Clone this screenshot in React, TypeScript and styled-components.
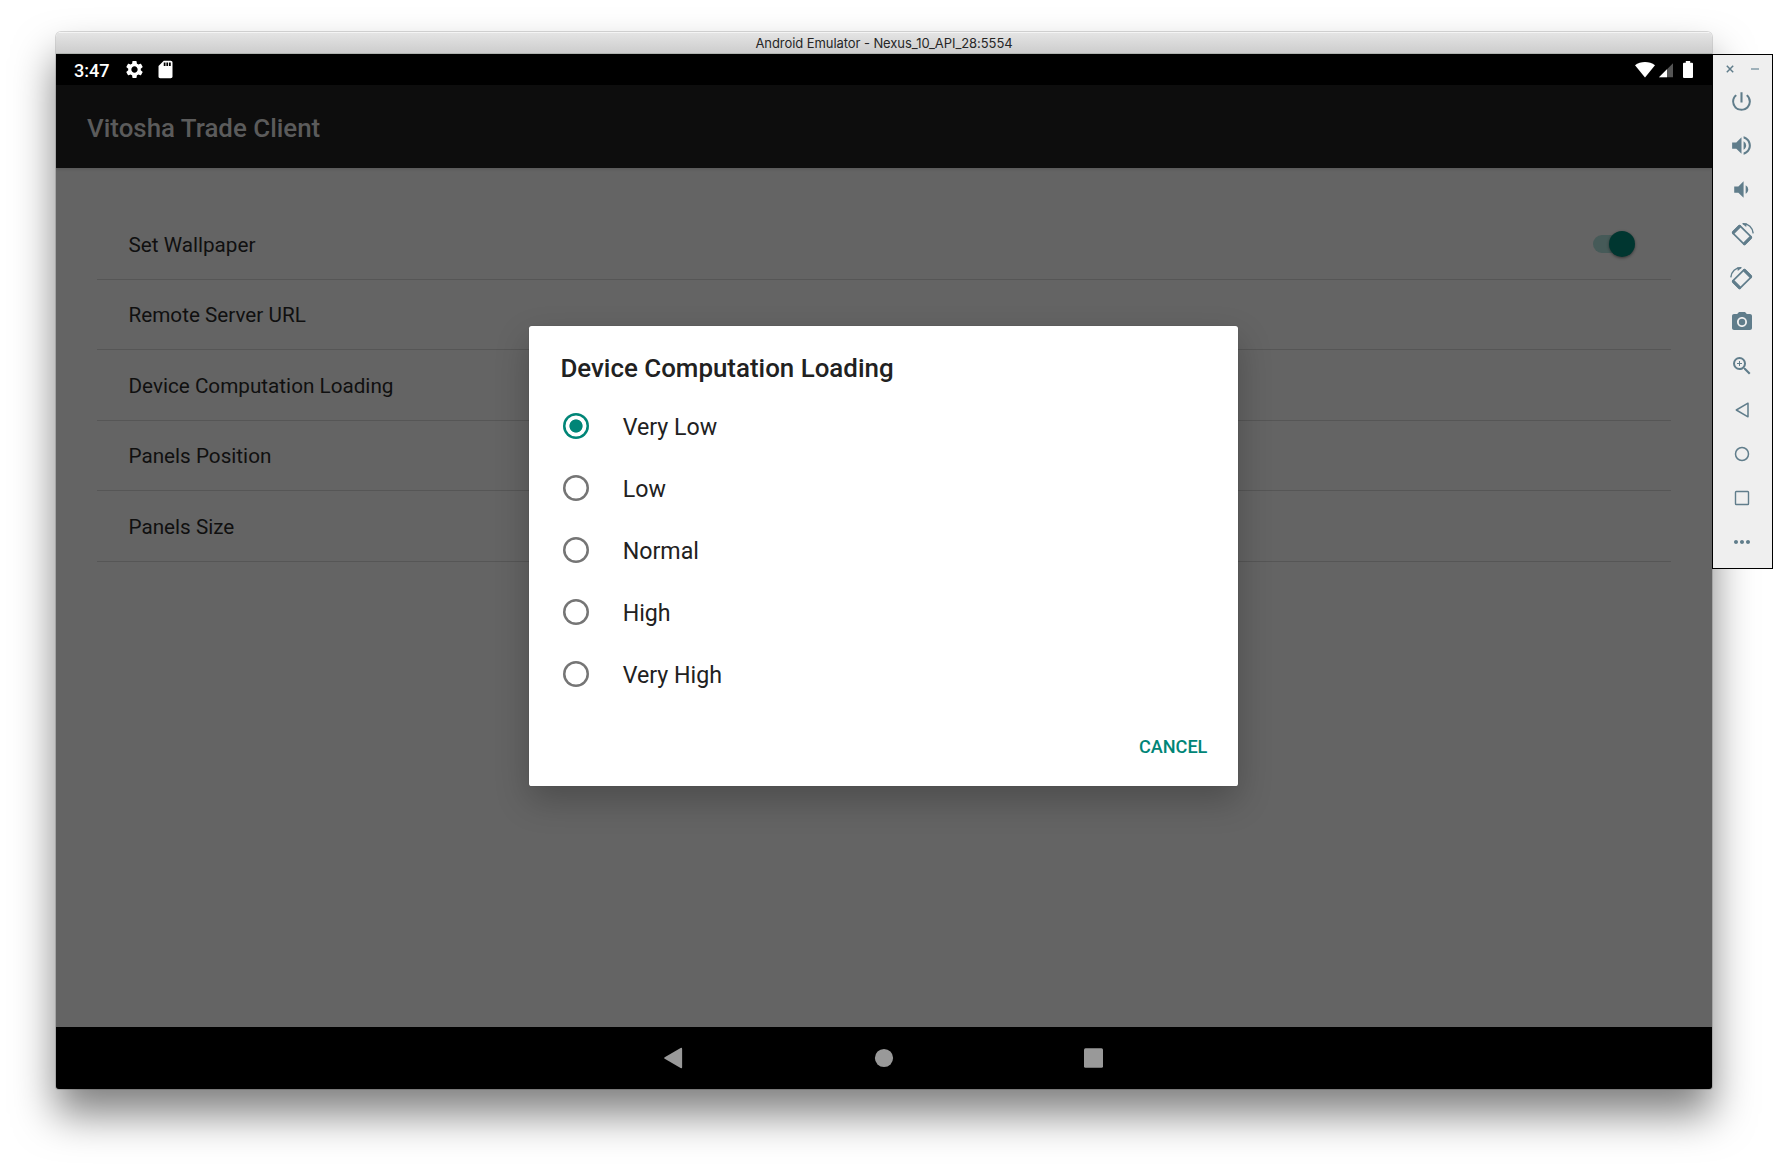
import React, { useState } from "react";
import styled, { createGlobalStyle } from "styled-components";
import {
  MdSettings,
  MdSdCard,
  MdPowerSettingsNew,
  MdVolumeUp,
  MdVolumeDown,
  MdPhotoCamera,
  MdZoomIn,
  MdMoreHoriz,
} from "react-icons/md";

const GlobalStyle = createGlobalStyle`
  * { box-sizing: border-box; }
  body { margin: 0; background: #fff; overflow: hidden; }
`;

const Desktop = styled.main`
  display: flex;
  align-items: flex-start;
  width: 1773px;
  height: 1169px;
  padding: 32px 0 0 56px;
  overflow: hidden;
  font-family: Roboto, "Liberation Sans", sans-serif;
`;

const EmulatorWindow = styled.section`
  display: flex;
  flex-direction: column;
  width: 1656px;
  height: 1057px;
  border-radius: 5px 5px 3px 3px;
  overflow: hidden;
  box-shadow: 0 0 0 1px rgba(0, 0, 0, 0.14), 0 25px 42px rgba(0, 0, 0, 0.5);
`;

const TitleBar = styled.header`
  display: flex;
  align-items: center;
  justify-content: center;
  height: 22px;
  flex: none;
  background: linear-gradient(#e4e4e4, #cdcdcd);
  border-top: 1px solid #f4f4f4;
  border-bottom: 1px solid #b0b4b0;
  color: #262626;
  font: 400 13px/20px Inter, Roboto, sans-serif;
  letter-spacing: -0.07px;
`;

const Screen = styled.div`
  position: relative;
  display: flex;
  flex-direction: column;
  flex: 1;
  background: #646464;
`;

const StatusBar = styled.div`
  display: flex;
  align-items: center;
  height: 31px;
  padding: 0 19px 0 18px;
  background: #000;
  color: #fff;
`;

const Clock = styled.span`
  width: 50px;
  font-size: 18.1px;
  font-weight: 500;
  line-height: 31px;
  padding-top: 2px;
`;

const StatusIcons = styled.div`
  display: flex;
  align-items: center;
  gap: 10px;
`;

const SystemIcons = styled.svg`
  margin-left: auto;
  display: block;
`;

const AppBar = styled.div`
  display: flex;
  align-items: center;
  height: 83px;
  padding: 3px 31px 0;
  background: #0d0d0d;
  color: #5b5b5b;
  font-size: 25.9px;
  font-weight: 500;
  box-shadow: 0 1px 3px rgba(0, 0, 0, 0.15);
`;

const Preferences = styled.ul`
  list-style: none;
  margin: 0;
  padding: 41px 41px 0 41px;
  flex: 1;
`;

const Preference = styled.li`
  display: flex;
  align-items: center;
  justify-content: space-between;
  height: 70.5px;
  padding: 2px 35px 0 31.5px;
  border-bottom: 1px solid #565656;
  color: #101010;
  font-size: 20.7px;
`;

const SwitchTrack = styled.span`
  display: flex;
  justify-content: flex-end;
  align-items: center;
  width: 41px;
  height: 18px;
  margin: 0 2px 2px 0;
  border-radius: 9px;
  background: #465a58;
`;

const SwitchThumb = styled.span`
  width: 26px;
  height: 26px;
  flex: none;
  margin-right: -1px;
  border-radius: 50%;
  background: #003630;
  box-shadow: 0 1px 3px rgba(0, 0, 0, 0.45);
`;

const NavBar = styled.nav`
  display: flex;
  justify-content: center;
  align-items: center;
  gap: 180px;
  height: 62px;
  background: #000;
`;

const NavIcon = styled.svg`
  display: block;
  width: 29px;
  height: 24px;
  fill: #999;
`;

const Dialog = styled.div`
  position: absolute;
  left: 473.4px;
  top: 272.3px;
  width: 709px;
  height: 459.3px;
  display: flex;
  flex-direction: column;
  background: #fff;
  border-radius: 2.6px;
  box-shadow: 0 0 1px rgba(0, 0, 0, 0.25), 0 14px 34px rgba(0, 0, 0, 0.24);
  color: #212121;
`;

const DialogTitle = styled.h2`
  margin: 0;
  padding: 27px 31px 0;
  font-size: 25.9px;
  line-height: 30px;
  font-weight: 500;
  height: 68.7px;
`;

const Option = styled.div`
  display: flex;
  align-items: center;
  height: 62px;
  padding-left: 33.6px;
  gap: 33.7px;
  font-size: 23.2px;
  line-height: 28px;
`;

const OptionLabel = styled.span`
  padding-top: 2px;
`;

const Radio = styled.span<{ $on: boolean }>`
  width: 26px;
  height: 26px;
  border-radius: 50%;
  box-shadow: inset 0 0 0 2.5px ${(p) => (p.$on ? "#008577" : "#757575")};
  background: ${(p) => (p.$on ? "radial-gradient(circle, #008577 6.2px, transparent 7px)" : "none")};
`;

const Actions = styled.div`
  display: flex;
  justify-content: flex-end;
  padding: 29.8px 31px 0;
`;

const TextButton = styled.button`
  border: 0;
  padding: 0;
  background: none;
  color: #008577;
  font: 500 18.1px/24px Roboto, sans-serif;
`;

const Toolbar = styled.aside`
  display: flex;
  flex-direction: column;
  align-items: center;
  width: 61px;
  height: 515px;
  margin-top: 22px;
  border: 1px solid #000;
  background: #efefef;
  color: #607d8b;
  position: relative;
`;

const WindowControls = styled.div`
  display: flex;
  gap: 17px;
  height: 25px;
  padding-top: 10px;
`;

const ToolButton = styled.div<{ $large?: boolean }>`
  display: flex;
  align-items: center;
  justify-content: center;
  width: 100%;
  height: 44px;
  padding: ${(p) => (p.$large ? "0 2px 1px 0" : "0 1px 0 0")};
  svg { display: block; }
`;

const RotateIcon = ({ right }: { right?: boolean }) => (
  <svg width="26" height="26" viewBox="0 0 26 26" fill="none" stroke="currentColor">
    <g transform={right ? "matrix(-1 0 0 1 26 0)" : undefined}>
      <g transform="rotate(-45 13 14)">
        <rect x="7.900" y="5.500" width="10.200" height="17" rx="1" strokeWidth="1.700" />
        <path d="M8.600 6.200h8.800M8.600 21.800h8.800" strokeWidth="3" strokeLinecap="round" />
      </g>
      <path d="M13.800 2.700C19.300 2.400 23.700 6.500 24.200 12.400" strokeWidth="1.400" />
      <path d="M13 2.500 17.800 2.300 17.200 5.900Z" fill="currentColor" stroke="none" />
    </g>
  </svg>
);

const options = ["Very Low", "Low", "Normal", "High", "Very High"];
const preferences = ["Set Wallpaper", "Remote Server URL", "Device Computation Loading", "Panels Position", "Panels Size"];

export default function App() {
  const [selected, setSelected] = useState("Very Low");

  return (
    <>
      <GlobalStyle />
      <Desktop>
        <EmulatorWindow>
          <TitleBar>Android Emulator - Nexus_10_API_28:5554</TitleBar>
          <Screen>
            <StatusBar>
              <Clock>3:47</Clock>
              <StatusIcons>
                <MdSettings size={21} />
                <MdSdCard size={21} />
              </StatusIcons>
              <SystemIcons width="60" height="18" viewBox="0 0 60 18" fill="#fff">
                <path d="M2 4.2C7.5-.2 16.5-.2 22 4.2L12 16.6Z" />
                <path d="M26 16.3 40 2.3V16.3Z" fill="#555" />
                <path d="M26 16.3 34 8.3V16.3Z" />
                <path d="M52.8 0h4.4v1.8H59q1 0 1 1V16q0 1-1 1h-8q-1 0-1-1V2.8q0-1 1-1h1.8Z" />
              </SystemIcons>
            </StatusBar>
            <AppBar>Vitosha Trade Client</AppBar>
            <Preferences>
              {preferences.map((name, i) => (
                <Preference key={name}>
                  {name}
                  {i === 0 && (
                    <SwitchTrack>
                      <SwitchThumb />
                    </SwitchTrack>
                  )}
                </Preference>
              ))}
            </Preferences>
            <NavBar>
              <NavIcon viewBox="0 0 29 24"><path d="M3.700 11.200 19.600 2q1.500-.8 1.500.7V21.300q0 1.500-1.500.7L3.700 12.800Q2.400 12 3.700 11.200Z" /></NavIcon>
              <NavIcon viewBox="0 0 29 24"><circle cx="14" cy="12" r="9.100" /></NavIcon>
              <NavIcon viewBox="0 0 29 24"><rect x="5" y="2.200" width="19" height="19.600" rx="1.500" /></NavIcon>
            </NavBar>
            <Dialog role="dialog">
              <DialogTitle>Device Computation Loading</DialogTitle>
              {options.map((name) => (
                <Option key={name} onClick={() => setSelected(name)}>
                  <Radio $on={name === selected} />
                  <OptionLabel>{name}</OptionLabel>
                </Option>
              ))}
              <Actions>
                <TextButton>CANCEL</TextButton>
              </Actions>
            </Dialog>
          </Screen>
        </EmulatorWindow>
        <Toolbar>
          <WindowControls>
            <svg width="8" height="8" viewBox="0 0 8 8" stroke="currentColor" strokeWidth="1.500"><path d="M.8.8 7.200 7.200M7.200.8.8 7.200" /></svg>
            <svg width="8" height="8" viewBox="0 0 8 8" stroke="#9fb1ba" strokeWidth="2"><path d="M0 4h8" /></svg>
          </WindowControls>
          <ToolButton $large><MdPowerSettingsNew size={25} /></ToolButton>
          <ToolButton $large><MdVolumeUp size={25} /></ToolButton>
          <ToolButton $large><MdVolumeDown size={25} /></ToolButton>
          <ToolButton><RotateIcon /></ToolButton>
          <ToolButton><RotateIcon right /></ToolButton>
          <ToolButton><MdPhotoCamera size={24} /></ToolButton>
          <ToolButton><MdZoomIn size={24} /></ToolButton>
          <ToolButton>
            <svg width="16" height="18" viewBox="0 0 16 18" fill="none" stroke="currentColor" strokeWidth="1.500" strokeLinejoin="round"><path d="M2.300 9 14 2.200V15.800Z" /></svg>
          </ToolButton>
          <ToolButton>
            <svg width="16" height="16" viewBox="0 0 16 16" fill="none" stroke="currentColor" strokeWidth="1.500"><circle cx="8" cy="8" r="6.500" /></svg>
          </ToolButton>
          <ToolButton>
            <svg width="16" height="16" viewBox="0 0 16 16" fill="none" stroke="currentColor" strokeWidth="1.400"><rect x="1.500" y="1.500" width="13" height="13" rx=".8" /></svg>
          </ToolButton>
          <ToolButton><MdMoreHoriz size={24} /></ToolButton>
        </Toolbar>
      </Desktop>
    </>
  );
}
